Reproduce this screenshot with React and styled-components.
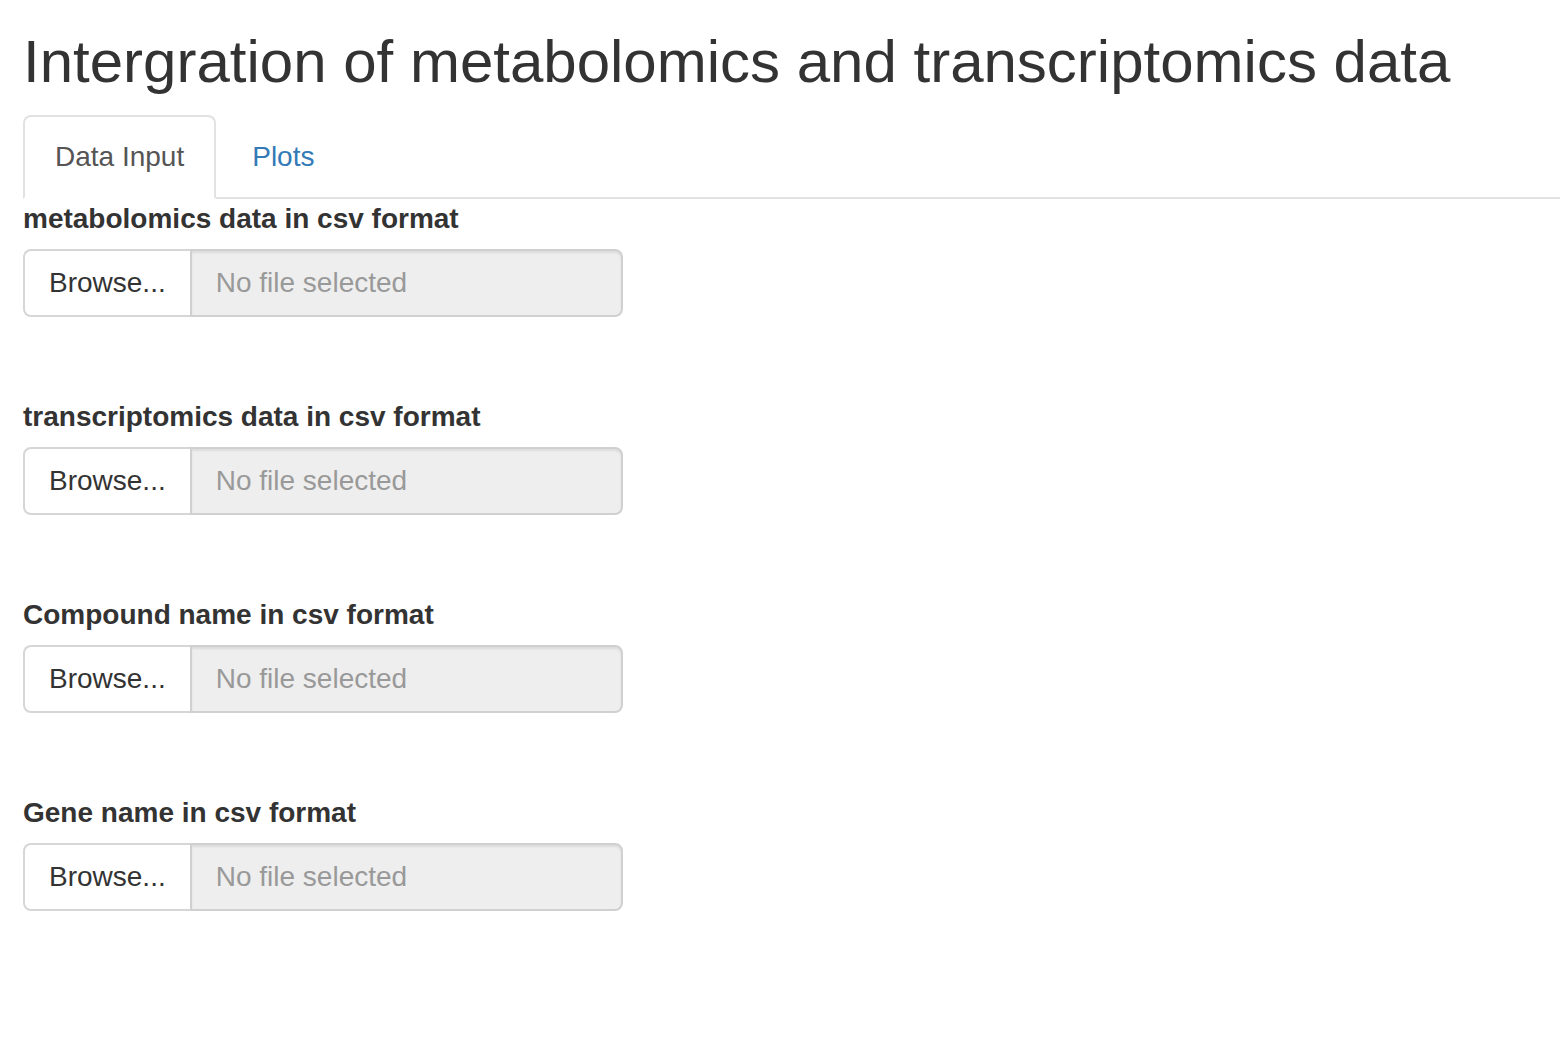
import React from "react";
import styled, { createGlobalStyle } from "styled-components";

const Global = createGlobalStyle`
  html, body { margin: 0; padding: 0; background: #fff; }
  body {
    font-family: "Liberation Sans", Arial, Helvetica, sans-serif;
    font-size: 28px;
    line-height: 40px;
    color: #333;
  }
  * { box-sizing: border-box; }
`;

const Page = styled.div`
  padding-left: 23px;
`;

const Title = styled.h2`
  margin: 29px 0 20px;
  font-size: 60px;
  font-weight: 500;
  line-height: 66px;
  color: #333;
`;

const TabList = styled.ul`
  list-style: none;
  margin: 0;
  padding: 0;
  display: flex;
  border-bottom: 2px solid #e2e2e2;
`;

const TabItem = styled.li`
  margin-right: 4px;
  margin-bottom: -2px;
`;

const TabLink = styled.a`
  display: block;
  padding: 20px 30px;
  line-height: 40px;
  font-size: 28px;
  text-decoration: none;
  border: 2px solid ${(p) => (p.$active ? "#e2e2e2" : "transparent")};
  border-bottom-color: ${(p) => (p.$active ? "#fff" : "transparent")};
  border-radius: 8px 8px 0 0;
  background: ${(p) => (p.$active ? "#fff" : "transparent")};
  color: ${(p) => (p.$active ? "#555" : "#337ab7")};
  cursor: ${(p) => (p.$active ? "default" : "pointer")};
`;

const FormGroup = styled.div`
  width: 600px;
`;

const Label = styled.label`
  display: block;
  font-weight: 700;
  font-size: 28px;
  line-height: 40px;
  margin-bottom: 10px;
`;

const InputGroup = styled.div`
  display: flex;
  height: 68px;
`;

const BrowseButton = styled.span`
  display: flex;
  align-items: center;
  padding: 0 24px;
  font-size: 28px;
  color: #333;
  background: #fff;
  border: 2px solid #d6d6d6;
  border-right: none;
  border-radius: 8px 0 0 8px;
  white-space: nowrap;
`;

const FileField = styled.div`
  flex: 1;
  display: flex;
  align-items: center;
  padding: 0 24px;
  font-size: 28px;
  color: #999;
  background: #eee;
  border: 2px solid #d0d0d0;
  border-radius: 0 8px 8px 0;
  box-shadow: inset 0 2px 2px rgba(0, 0, 0, 0.075);
`;

const ProgressSpacer = styled.div`
  height: 80px;
`;

const inputs = [
  "metabolomics data in csv format",
  "transcriptomics data in csv format",
  "Compound name in csv format",
  "Gene name in csv format",
];

export default function App() {
  return (
    <>
      <Global />
      <Page>
        <Title>Intergration of metabolomics and transcriptomics data</Title>
        <TabList>
          <TabItem>
            <TabLink $active>Data Input</TabLink>
          </TabItem>
          <TabItem>
            <TabLink>Plots</TabLink>
          </TabItem>
        </TabList>
        {inputs.map((label) => (
          <FormGroup key={label}>
            <Label>{label}</Label>
            <InputGroup>
              <BrowseButton>Browse...</BrowseButton>
              <FileField>No file selected</FileField>
            </InputGroup>
            <ProgressSpacer />
          </FormGroup>
        ))}
      </Page>
    </>
  );
}
